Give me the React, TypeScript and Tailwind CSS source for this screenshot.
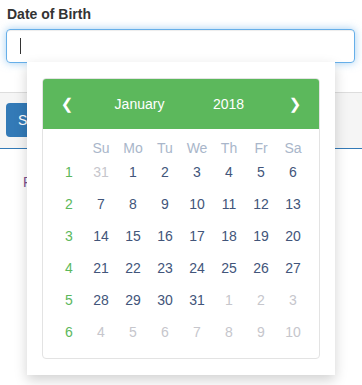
import React from "react";

const weekDays = ["Su", "Mo", "Tu", "We", "Th", "Fr", "Sa"];

type Day = { n: number; muted?: boolean };

const weeks: { wk: number; days: Day[] }[] = [
	{ wk: 1, days: [{ n: 31, muted: true }, { n: 1 }, { n: 2 }, { n: 3 }, { n: 4 }, { n: 5 }, { n: 6 }] },
	{ wk: 2, days: [7, 8, 9, 10, 11, 12, 13].map((n) => ({ n })) },
	{ wk: 3, days: [14, 15, 16, 17, 18, 19, 20].map((n) => ({ n })) },
	{ wk: 4, days: [21, 22, 23, 24, 25, 26, 27].map((n) => ({ n })) },
	{ wk: 5, days: [{ n: 28 }, { n: 29 }, { n: 30 }, { n: 31 }, { n: 1, muted: true }, { n: 2, muted: true }, { n: 3, muted: true }] },
	{ wk: 6, days: [4, 5, 6, 7, 8, 9, 10].map((n) => ({ n, muted: true })) },
];

const Calendar = () => {
	return (
		<div className="absolute left-[27px] top-[62px] w-[308px] h-[313px] bg-white shadow-[0_5px_12px_rgba(0,0,0,0.18)] pt-[16px] px-[15px]">
			<div className="w-[278px] h-[281px] border border-[#e3e3e3] rounded-[4px] overflow-hidden">
				<div className="h-[50px] bg-[#5cb85c] flex items-center pl-[8px] text-white text-[14px]">
					<span className="w-[32px] text-center font-['DejaVu_Sans',sans-serif] text-[15px] font-bold">❮</span>
					<span className="w-[113px] text-center">January</span>
					<span className="w-[65px] text-center">2018</span>
					<span className="w-[18px]" />
					<span className="w-[32px] text-center font-['DejaVu_Sans',sans-serif] text-[15px] font-bold">❯</span>
				</div>
				<div className="pt-[11px] pl-[10px]">
					<div className="flex h-[16px] leading-[16px] text-[14px] text-[#a9b6ca]">
						<span className="w-[32px]" />
						{weekDays.map((d) => (
							<span key={d} className="w-[32px] text-center">
								{d}
							</span>
						))}
					</div>
					{weeks.map((w) => (
						<div key={w.wk} className="flex h-[32px] items-center text-[14px] leading-[18px]">
							<span className="w-[32px] text-center text-[#5cb85c]">{w.wk}</span>
							{w.days.map((d, i) => (
								<span
									key={i}
									className={
										d.muted
											? "w-[32px] text-center text-[#c6c6cc]"
											: "w-[32px] text-center text-[#42557a]"
									}
								>
									{d.n}
								</span>
							))}
						</div>
					))}
				</div>
			</div>
		</div>
	);
};

export default function App() {
	return (
		<div className="relative w-[362px] h-[385px] bg-white overflow-hidden font-['Liberation_Sans',Arial,sans-serif] text-[14px] text-[#333]">
			<div className="px-[6px] pt-[4px]">
				<p className="pl-[1px] mb-[5px] leading-[20px] font-bold">Date of Birth</p>
				<div className="w-[349px] h-[34px] border border-[#66afe9] rounded-[4px] shadow-[inset_0_1px_1px_rgba(0,0,0,0.075),0_0_8px_rgba(102,175,233,0.6)] flex items-center pl-[13px]">
					<span className="w-[1px] h-[16px] bg-[#333]" />
				</div>
			</div>
			<div className="mt-[29px] h-[57px] bg-[#f5f5f5] border-t border-[#dddddd] border-b border-b-[#337ab7] px-[6px] pt-[10px]">
				<button className="h-[34px] px-[12px] rounded-[4px] bg-[#337ab7] text-white text-[14px]">
					Save changes
				</button>
			</div>
			<div className="pl-[23px] pt-[23px]">
				<span className="text-[#7b4f8e]">Personal details</span>
			</div>
			<Calendar />
		</div>
	);
}
